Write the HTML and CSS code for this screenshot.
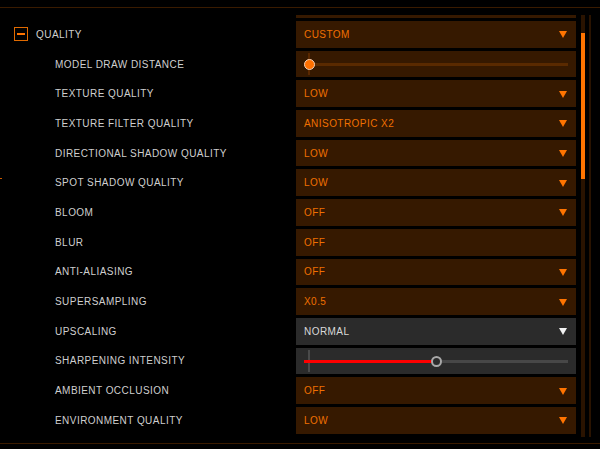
FILE: index.html
```html
<!DOCTYPE html>
<html>
<head>
<meta charset="utf-8">
<link rel="stylesheet" href="styles.css">
</head>
<body>
<div class="frame">
  <span class="edge-mark"></span>
  <div class="content">
    <div class="list">
      <div class="label"></div><div class="ctrl strip"></div>

      <div class="label head"><span class="toggle"><span class="minus"></span></span>QUALITY</div>
      <div class="ctrl select"><span>CUSTOM</span><span class="arrow"></span></div>

      <div class="label">MODEL DRAW DISTANCE</div>
      <div class="ctrl slider"><div class="track orange" style="--v:2%"><span class="tick"></span><span class="fill"></span><span class="thumb"></span></div></div>

      <div class="label">TEXTURE QUALITY</div>
      <div class="ctrl select"><span>LOW</span><span class="arrow"></span></div>

      <div class="label">TEXTURE FILTER QUALITY</div>
      <div class="ctrl select"><span>ANISOTROPIC X2</span><span class="arrow"></span></div>

      <div class="label">DIRECTIONAL SHADOW QUALITY</div>
      <div class="ctrl select"><span>LOW</span><span class="arrow"></span></div>

      <div class="label">SPOT SHADOW QUALITY</div>
      <div class="ctrl select"><span>LOW</span><span class="arrow"></span></div>

      <div class="label">BLOOM</div>
      <div class="ctrl select"><span>OFF</span><span class="arrow"></span></div>

      <div class="label">BLUR</div>
      <div class="ctrl select"><span>OFF</span></div>

      <div class="label">ANTI-ALIASING</div>
      <div class="ctrl select"><span>OFF</span><span class="arrow"></span></div>

      <div class="label">SUPERSAMPLING</div>
      <div class="ctrl select"><span>X0.5</span><span class="arrow"></span></div>

      <div class="label">UPSCALING</div>
      <div class="ctrl select grey"><span>NORMAL</span><span class="arrow"></span></div>

      <div class="label">SHARPENING INTENSITY</div>
      <div class="ctrl slider grey"><div class="track red" style="--v:50%"><span class="tick"></span><span class="fill"></span><span class="thumb"></span></div></div>

      <div class="label">AMBIENT OCCLUSION</div>
      <div class="ctrl select"><span>OFF</span><span class="arrow"></span></div>

      <div class="label">ENVIRONMENT QUALITY</div>
      <div class="ctrl select"><span>LOW</span><span class="arrow"></span></div>
    </div>
    <div class="scrollbar"><div class="thumb-bar"></div></div>
    <div class="rail"></div>
  </div>
</div>
</body>
</html>
```

FILE: styles.css
```css
html, body {
  margin: 0;
  padding: 0;
  background: #000;
}
body {
  font-family: "Liberation Sans", Arial, sans-serif;
  font-size: 10px;
  letter-spacing: 0.45px;
  width: 600px;
  height: 449px;
  overflow: hidden;
}
.frame {
  position: relative;
  margin-top: 7px;
  border-top: 1px solid #3a1b00;
  border-bottom: 1px solid #3a1b00;
  height: 435px;
}
.edge-mark {
  position: absolute;
  left: 0;
  top: 170px;
  width: 2px;
  height: 1px;
  background: #c85a00;
}
.content {
  display: flex;
  padding-top: 7px;
  height: 422px;
  overflow: hidden;
}
.list {
  display: grid;
  grid-template-columns: 296px 280px;
  grid-auto-rows: 26.7px;
  row-gap: 3px;
  align-content: start;
}
.list > .label:first-child,
.list > .strip {
  height: 3px;
}
.list > .strip { align-self: start; }
.list { grid-template-rows: 3px; }
.label {
  display: flex;
  align-items: center;
  padding-left: 55px;
  color: #cfcfcf;
}
.label.head {
  padding-left: 14px;
}
.toggle {
  width: 12px;
  height: 12px;
  border: 1px solid #e06a00;
  display: flex;
  align-items: center;
  justify-content: center;
  margin-right: 8px;
}
.minus {
  width: 8px;
  height: 2px;
  background: #ff7400;
}
.ctrl {
  background: #361900;
  display: flex;
  align-items: center;
  justify-content: space-between;
  padding: 0 9px 0 8px;
  color: #f07000;
}
.ctrl.grey {
  background: #2b2b2b;
  color: #d9d9d9;
}
.arrow {
  width: 0;
  height: 0;
  border-left: 4.5px solid transparent;
  border-right: 4.5px solid transparent;
  border-top: 7px solid #ff7400;
  margin-top: 1px;
}
.grey .arrow {
  border-top-color: #f2f2f2;
}
.slider {
  padding: 0 8px;
  align-items: stretch;
}
.track {
  position: relative;
  flex: 1;
  display: flex;
  align-items: center;
}
.track::before {
  content: "";
  position: absolute;
  left: 0;
  right: 0;
  top: 50%;
  height: 3px;
  margin-top: -1px;
}
.track.orange::before { background: #5a2a00; }
.track.red::before { background: #474747; }
.fill {
  position: absolute;
  left: 0;
  width: var(--v);
  top: 50%;
  height: 3px;
  margin-top: -1px;
}
.track.red .fill { background: #ff0000; }
.tick {
  position: absolute;
  left: 4px;
  top: 2px;
  bottom: 2px;
  width: 2px;
}
.track.orange .tick { background: #5a2800; }
.track.red .tick { background: #4a4a4a; }
.thumb {
  position: absolute;
  left: var(--v);
  top: 50%;
  width: 11px;
  height: 11px;
  margin: -5px 0 0 -5px;
  border-radius: 50%;
  box-sizing: border-box;
}
.track.orange .thumb {
  background: #ff7000;
  border: 1px solid #f4d2b8;
}
.track.red .thumb {
  background: #2b2b2b;
  border: 2px solid #a8a8a8;
}
.scrollbar {
  margin-left: 4.7px;
  width: 4.6px;
  height: 422px;
  background: #2a1300;
  position: relative;
}
.thumb-bar {
  margin-top: 18px;
  height: 146px;
  background: #ff7400;
}
.rail {
  margin-left: 3.7px;
  width: 2px;
  height: 422px;
  background: #2a1300;
}
```
